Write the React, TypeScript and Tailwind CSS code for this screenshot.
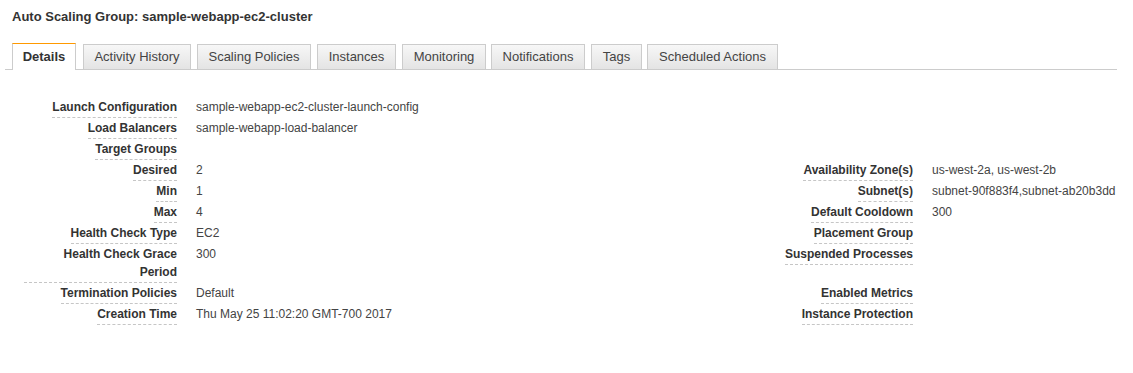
import React from "react";

const tabs = [
  { t: "Details", c: "w-[64px]" },
  { t: "Activity History", c: "w-[108px] ml-[7px]" },
  { t: "Scaling Policies", c: "w-[114px] ml-[6px]" },
  { t: "Instances", c: "w-[79px] ml-[6px]" },
  { t: "Monitoring", c: "w-[84px] ml-[6px]" },
  { t: "Notifications", c: "w-[94px] ml-[5px]" },
  { t: "Tags", c: "w-[51px] ml-[6px]" },
  { t: "Scheduled Actions", c: "w-[131px] ml-[5px]" },
];

type Row = { l: string; v?: string; rl?: string; rv?: string };

const rows: Row[] = [
  { l: "Launch Configuration", v: "sample-webapp-ec2-cluster-launch-config" },
  { l: "Load Balancers", v: "sample-webapp-load-balancer" },
  { l: "Target Groups" },
  { l: "Desired", v: "2", rl: "Availability Zone(s)", rv: "us-west-2a, us-west-2b" },
  { l: "Min", v: "1", rl: "Subnet(s)", rv: "subnet-90f883f4,subnet-ab20b3dd" },
  { l: "Max", v: "4", rl: "Default Cooldown", rv: "300" },
  { l: "Health Check Type", v: "EC2", rl: "Placement Group" },
  { l: "Health Check Grace Period", v: "300", rl: "Suspended Processes" },
  { l: "Termination Policies", v: "Default", rl: "Enabled Metrics" },
  { l: "Creation Time", v: "Thu May 25 11:02:20 GMT-700 2017", rl: "Instance Protection" },
];

function Label({ text }: { text?: string }) {
  if (!text) return <div />;
  return (
    <div className="flex justify-end items-start">
      <div className="max-w-[153px] text-right border-b border-dashed border-[#c6c6c6] pb-[1px] font-bold text-[12px] leading-[18px] text-[#333]">
        {text}
      </div>
    </div>
  );
}

function Value({ text }: { text?: string }) {
  return <div className="text-[12px] leading-[18px] text-[#444]">{text ?? ""}</div>;
}

export default function App() {
  return (
    <div
      className="w-[1133px] h-[373px] bg-white"
      style={{ fontFamily: '"Liberation Sans", Arial, sans-serif' }}
    >
      <div className="pl-[12px] pt-[9px] text-[13px] leading-[16px] font-bold text-[#333]">
        Auto Scaling Group: sample-webapp-ec2-cluster
      </div>
      <div className="ml-[5px] mr-[16px] mt-[18px] flex items-end border-b border-[#cccccc] pl-[7px] h-[27px]">
        {tabs.map(({ t, c }, i) =>
          i === 0 ? (
            <div
              key={t}
              className={`${c} h-[27px] -mb-[1px] shrink-0 justify-center flex items-center bg-white border border-b-0 border-[#cccccc] border-t-[#f90] text-[13px] font-bold text-[#333]`}
            >
              {t}
            </div>
          ) : (
            <div
              key={t}
              className={`${c} h-[26px] -mb-[1px] shrink-0 justify-center flex items-center border border-[#cccccc] bg-gradient-to-b from-[#f7f7f7] to-[#e4e4e4] text-[13px] text-[#444] whitespace-nowrap`}
            >
              {t}
            </div>
          )
        )}
      </div>
      <div className="mt-[28px] pl-[24px] grid grid-cols-[153px_545px_153px_1fr] gap-x-[19px] gap-y-[1px]">
        {rows.map((r) => (
          <React.Fragment key={r.l}>
            <Label text={r.l} />
            <Value text={r.v} />
            <Label text={r.rl} />
            <Value text={r.rv} />
          </React.Fragment>
        ))}
      </div>
    </div>
  );
}
